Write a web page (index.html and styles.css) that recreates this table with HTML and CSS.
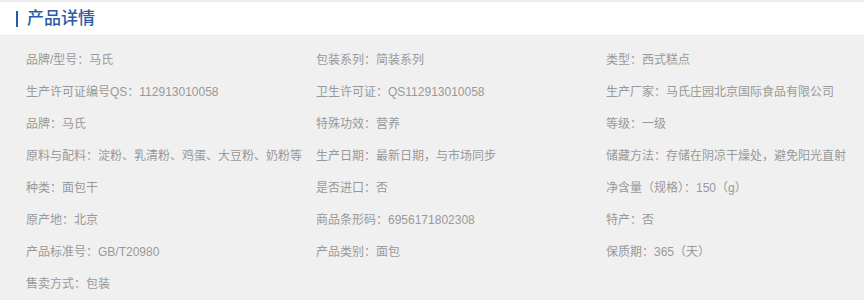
FILE: index.html
```html
<!DOCTYPE html>
<html lang="zh-CN">
<head>
<meta charset="utf-8">
<title>产品详情</title>
<link rel="stylesheet" href="styles.css">
</head>
<body>
<section class="detail">
  <header class="detail-head">
    <h2 class="detail-title">产品详情</h2>
  </header>
  <ul class="attr-list">
    <li>品牌/型号：马氏</li>
    <li>包装系列：简装系列</li>
    <li>类型：西式糕点</li>
    <li>生产许可证编号QS：112913010058</li>
    <li>卫生许可证：QS112913010058</li>
    <li>生产厂家：马氏庄园北京国际食品有限公司</li>
    <li>品牌：马氏</li>
    <li>特殊功效：营养</li>
    <li>等级：一级</li>
    <li>原料与配料：淀粉、乳清粉、鸡蛋、大豆粉、奶粉等</li>
    <li>生产日期：最新日期，与市场同步</li>
    <li>储藏方法：存储在阴凉干燥处，避免阳光直射</li>
    <li>种类：面包干</li>
    <li>是否进口：否</li>
    <li>净含量（规格）：150（g）</li>
    <li>原产地：北京</li>
    <li>商品条形码：6956171802308</li>
    <li>特产：否</li>
    <li>产品标准号：GB/T20980</li>
    <li>产品类别：面包</li>
    <li>保质期：365（天）</li>
    <li>售卖方式：包装</li>
  </ul>
</section>
</body>
</html>
```
FILE: styles.css
```css
html, body {
  margin: 0;
  padding: 0;
  background: #f0f0f0;
}

body {
  font-family: "Liberation Sans", "Noto Sans CJK SC", sans-serif;
  width: 864px;
  height: 300px;
  overflow: hidden;
}

.detail-head {
  background: #fff;
  border-top: 2px solid #ececec;
  height: 33px;
  display: flex;
  align-items: center;
  padding-left: 16px;
}

.detail-title {
  margin: 0;
  font-size: 17px;
  font-weight: 500;
  color: #2b5ba8;
  line-height: 16px;
  border-left: 2px solid #2b5ba8;
  padding-left: 9px;
}

.attr-list {
  list-style: none;
  margin: 0;
  padding: 8px 0 0 26px;
  display: grid;
  grid-template-columns: 290px 290px 290px;
  border-top: 1px solid #eaeaea;
}

.attr-list li {
  height: 32px;
  line-height: 32px;
  font-size: 12px;
  color: #999;
  white-space: nowrap;
}
```
